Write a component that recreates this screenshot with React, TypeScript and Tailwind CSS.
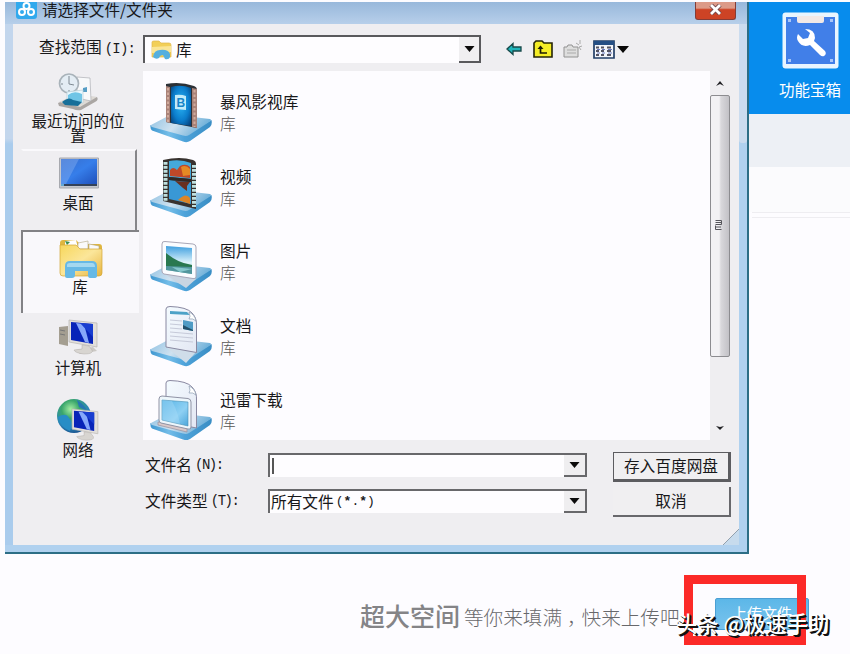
import type { ReactNode } from "react";

function DropArrow() {
  return (
    <svg className="w-[11px] h-[6px]" viewBox="0 0 11 6">
      <path d="M0.5 0h10L5.5 6z" fill="#0b0b0b" />
    </svg>
  );
}

function Stand({ children }: { children: ReactNode }) {
  return (
    <svg className="w-[62px] h-[62px] shrink-0" viewBox="0 0 62 62">
      <defs>
        <linearGradient id="stand" x1="0" y1="0" x2="1" y2="0.3">
          <stop offset="0" stopColor="#8fc1e2" />
          <stop offset="0.5" stopColor="#cfe2f0" />
          <stop offset="1" stopColor="#6cafd9" />
        </linearGradient>
        <linearGradient id="rim" x1="0" y1="0" x2="1" y2="0">
          <stop offset="0" stopColor="#3f97d0" />
          <stop offset="0.3" stopColor="#74bde8" />
          <stop offset="0.55" stopColor="#4ea3da" />
          <stop offset="1" stopColor="#398dc4" />
        </linearGradient>
        <linearGradient id="paper" x1="0" y1="0" x2="1" y2="1">
          <stop offset="0" stopColor="#f4fbff" />
          <stop offset="1" stopColor="#e3e7f3" />
        </linearGradient>
        <linearGradient id="screen" x1="0" y1="0" x2="1" y2="1">
          <stop offset="0" stopColor="#56b4e6" />
          <stop offset="0.6" stopColor="#8ed0f3" />
          <stop offset="1" stopColor="#4ba6da" />
        </linearGradient>
      </defs>
      <path d="M0.5 43L36 53L61.500 38Q62.500 43 60 45L40 59Q37 61 33 59.500L2 48.500Q0 47 0.500 43Z" fill="url(#rim)" />
      <path d="M1 43L20 33Q22 32 25 33L60 37Q62 38 60 39.500L39 53Q36.500 54.500 33 53.500L2 45Q0 44 1 43Z" fill="url(#stand)" />
      {children}
    </svg>
  );
}

function BaofengIcon() {
  return (
    <Stand>
      <defs>
        <radialGradient id="bf" cx="0.5" cy="0.45" r="0.7">
          <stop offset="0" stopColor="#2bb6f5" />
          <stop offset="0.6" stopColor="#0b7ccb" />
          <stop offset="1" stopColor="#063f78" />
        </radialGradient>
      </defs>
      <path d="M16 2Q30 -1 44 4Q47 5 47 8V46L16 40Z" fill="#2b3036" />
      <path d="M16 4L20 5V41L16 40ZM42 6L47 7V46L42 45Z" fill="#a98278" />
      <path d="M18 6V40M44.500 8V45" stroke="#d0aa9c" strokeWidth="2" strokeDasharray="2.500 2" />
      <path d="M21 5Q31 2 41 6V44L21 41Z" fill="url(#bf)" />
      <path d="M25 13Q31 12 36 14V28L25 27Z" fill="#d5f4fc" opacity="0.9" />
      <text x="26.500" y="25" fontFamily="Liberation Sans" fontWeight="bold" fontSize="12" fill="#1685c9">B</text>
    </Stand>
  );
}

function VideoIcon() {
  return (
    <Stand>
      <path d="M13 3Q30 -1 43 3Q46 4 46 7V52L13 44Z" fill="#38322f" />
      <path d="M15.500 5V44M44 8V50" stroke="#bfe0df" strokeWidth="4" strokeDasharray="2.800 1.200" />
      <path d="M19 4Q31 2 41 6V22L19 20Z" fill="#45a9dc" />
      <path d="M19 23L41 25V47L19 42Z" fill="#3998d5" />
      <path d="M20 13Q23 9 27 13L30 9Q36 6 40 10V21L20 19Z" fill="#bf4828" />
      <path d="M31 10Q36 7 40 12V18L33 19Z" fill="#e58a25" />
      <path d="M25 24L40 25L37 29V34L33 31Z" fill="#693021" />
      <path d="M28 43Q36 35 40 41V47Z" fill="#dd8527" />
      <path d="M19 21.500L41 23.500" stroke="#332824" strokeWidth="3" />
    </Stand>
  );
}

function PictureIcon() {
  return (
    <Stand>
      <defs>
        <linearGradient id="sky" x1="0" y1="0" x2="0" y2="1">
          <stop offset="0" stopColor="#3f9fdf" />
          <stop offset="0.6" stopColor="#dff4fb" />
          <stop offset="1" stopColor="#6cb5b5" />
        </linearGradient>
      </defs>
      <path d="M16 44L46 48L36 57Z" fill="#c9d5e2" />
      <path d="M12 13Q12 10 15 10.500L43 13Q46 13.500 46 16V46Q46 48 43 47.500L14 43Q12 42.500 12 40Z" fill="#fafcff" stroke="#a9a7b7" />
      <path d="M16 15L42 17V43L16 39Z" fill="url(#sky)" />
      <path d="M16 22Q27 31 38 33L42 34V37L16 36Z" fill="#29784f" />
      <path d="M16 35L42 36V43L16 39Z" fill="#52969d" />
      <path d="M22 36L42 38L30 41Z" fill="#85c7cc" />
    </Stand>
  );
}

function DocumentIcon() {
  return (
    <Stand>
      <path d="M16 41L46 46L36 57Z" fill="#cfdde9" />
      <path d="M16 3Q16 0.500 20 0.500Q37 1 42 7Q47 12 46.500 20V46.500L16 41Z" fill="url(#paper)" stroke="#8988a1" />
      <path d="M20 5L37 6L40 9L20 8Z" fill="#4ba2c7" />
      <path d="M20 14L32 15M20 18L32 19M20 22L32 23M20 26L43 28M20 30L43 32M20 34L43 36" stroke="#c6cad9" />
      <path d="M33 14L43 16V25L33 23Z" fill="#4f9bc5" />
      <path d="M33 19L43 24V25L33 23Z" fill="#23516c" />
      <path d="M39 6Q41 11 39 13Q43 12 46 15Q45 9 39 6Z" fill="#fff" stroke="#8e9db2" strokeWidth="0.700" />
    </Stand>
  );
}

function DownloadIcon() {
  return (
    <Stand>
      <path d="M16 3Q16 0.500 20 0.500Q37 1 42 7Q47 12 46.500 20V48L16 42Z" fill="url(#paper)" stroke="#8988a1" />
      <path d="M39 6Q41 11 39 13Q43 12 46 15Q45 9 39 6Z" fill="#fff" stroke="#8e9db2" strokeWidth="0.700" />
      <path d="M8 42L37 48V52L8 45Z" fill="#d9c8c8" stroke="#98909d" strokeWidth="0.700" />
      <path d="M9 19Q9 16 12 16L38 18.500Q41 19 41 22V47Q41 50 38 49L11 43Q9 42.500 9 40Z" fill="#edf6fb" stroke="#9093a5" />
      <path d="M12 20L38 22V46L12 40Z" fill="url(#screen)" stroke="#478eb4" strokeWidth="0.600" />
      <path d="M12 20L22 21Q28 32 30 44L12 40Z" fill="#b3e0f8" opacity="0.35" />
    </Stand>
  );
}

function RecentIcon() {
  return (
    <svg className="w-[42px] h-[38px]" viewBox="0 0 42 38">
      <path d="M1 30L17 23L40 24Q42 27 38 29L24 37Q20 38 16 36L2 33Z" fill="#aaa6a3" />
      <path d="M2 29L17 22L40 24L23 34Z" fill="#dedad5" />
      <path d="M20 4L33 5L34 28L20 25Z" fill="#f8f9fa" stroke="#adafb5" strokeWidth="0.700" />
      <path d="M26 15L30 14V19L26 19Z" fill="#579ec5" />
      <circle cx="12" cy="10.500" r="9.500" fill="#e4edf4" stroke="#a9b3ba" strokeWidth="1.700" />
      <path d="M12 3V11L17 12M4 11H6M12 17V19" fill="none" stroke="#7e8992" />
      <path d="M10 19L26 17V30L10 30Z" fill="#e9f8fe" stroke="#b9ced7" strokeWidth="0.700" />
      <path d="M11 22Q17 17 25 21V29L11 28Z" fill="#70c5e6" />
      <path d="M5 29Q12 23 16 27L25 29L21 33L8 32Z" fill="#176f99" />
    </svg>
  );
}

function DesktopIcon() {
  return (
    <svg className="w-[40px] h-[32px] shrink-0" viewBox="0 0 40 32">
      <defs>
        <linearGradient id="desk" x1="0" y1="0" x2="1" y2="1">
          <stop offset="0" stopColor="#376dcc" />
          <stop offset="0.5" stopColor="#367eea" />
          <stop offset="1" stopColor="#1f50bb" />
        </linearGradient>
      </defs>
      <path d="M0.500 1H39.500V31H0.500Z" fill="#c4c7cd" stroke="#a7a9af" />
      <path d="M2 2H38V27H2Z" fill="url(#desk)" />
      <path d="M2 2H20L7 27H2Z" fill="#8bb4f2" opacity="0.4" />
      <path d="M2 27H38V29H2Z" fill="#344258" />
      <path d="M2 27H5V29H2Z" fill="#62a9d4" />
    </svg>
  );
}

function LibraryIcon({ className }: { className: string }) {
  return (
    <svg className={className} viewBox="0 0 44 39" preserveAspectRatio="none">
      <defs>
        <linearGradient id="folder" x1="0" y1="0" x2="1" y2="1">
          <stop offset="0" stopColor="#f7d75b" />
          <stop offset="0.5" stopColor="#fbe69a" />
          <stop offset="1" stopColor="#e7b43e" />
        </linearGradient>
      </defs>
      <path d="M1 4Q1 1 4 1H17L21 5H40Q43 5 43 8V33Q43 36 40 36H4Q1 36 1 33Z" fill="#dfb640" />
      <path d="M6 2L17 1L19 9H6Z" fill="#fff" />
      <path d="M6 2L11 3L8 6Z" fill="#398e51" />
      <path d="M19 4L29 2V10H19ZM30 5L40 7V11H30Z" fill="#fafafa" stroke="#b4a883" strokeWidth="0.600" />
      <path d="M1 6H17L21 10H43V34Q43 37 40 37H4Q1 37 1 34Z" fill="url(#folder)" stroke="#d2a737" strokeWidth="0.700" />
      <path d="M6 37V27Q6 22 11 22H33Q38 22 38 27V37Q38 39 35 39H31Q29 39 29 36V32H16V36Q16 39 13 39H8Q6 39 6 37Z" fill="#67b9e5" />
      <path d="M8 26Q8 24 11 24H33Q36 24 36 28H8Z" fill="#a3d8f0" />
    </svg>
  );
}

function SmallLibraryIcon() {
  return (
    <svg className="w-[21px] h-[20px]" viewBox="0 0 21 20">
      <path d="M1 2Q1 1 3 1H8L10 3H18Q20 3 20 5V17H1Z" fill="#f2cf58" stroke="#dfb54b" strokeWidth="0.700" />
      <path d="M1 7L20 6V12L1 13Z" fill="#fae596" />
      <path d="M2 17Q3 10 9 10Q17 9 19 14V17Q18 20 14 19L12 15Q9 15 8 18Q5 20 2 17Z" fill="#55afdf" />
    </svg>
  );
}

function Monitor() {
  return (
    <g>
      <path d="M11 1L39 4V28L11 23Z" fill="#e2dfdb" stroke="#b8b5b1" strokeWidth="0.700" />
      <path d="M13 3L35 5V25L13 21Z" fill="#0824b8" />
      <path d="M18 4L26 5L31 24L27 23Z" fill="#86a8fb" />
      <path d="M22 4L35 5V18Z" fill="#183dd0" />
      <path d="M24 26L31 27L34 31Q36 35 26 35Q17 34 16 31L24 30Z" fill="#d8d5d1" stroke="#b2aeaa" strokeWidth="0.500" />
    </g>
  );
}

function ComputerIcon() {
  return (
    <svg className="w-[40px] h-[36px]" viewBox="0 0 40 36">
      <path d="M1 8L10 7V27L1 25Z" fill="#a49e91" />
      <path d="M2 11L7 12M2 15L7 16" stroke="#777" />
      <path d="M17 31L35 28L39 32L22 35Z" fill="#cbc8c4" />
      <Monitor />
    </svg>
  );
}

function NetworkIcon() {
  return (
    <svg className="w-[42px] h-[43px]" viewBox="0 0 42 43">
      <defs>
        <radialGradient id="globe" cx="0.4" cy="0.3" r="0.75">
          <stop offset="0" stopColor="#a6efa2" />
          <stop offset="0.35" stopColor="#3aa66b" />
          <stop offset="0.7" stopColor="#2a85b8" />
          <stop offset="1" stopColor="#174b88" />
        </radialGradient>
      </defs>
      <circle cx="17" cy="18" r="17" fill="url(#globe)" />
      <path d="M1 19Q9 14 12 20Q17 24 13 33Q3 29 1 19Z" fill="#278dc6" />
      <path d="M20 2Q28 7 30 13L22 9Z" fill="#2576b2" />
      <g transform="translate(5 10) scale(0.92)">
        <Monitor />
      </g>
    </svg>
  );
}

const libraries = [
  { name: "暴风影视库", icon: <BaofengIcon /> },
  { name: "视频", icon: <VideoIcon /> },
  { name: "图片", icon: <PictureIcon /> },
  { name: "文档", icon: <DocumentIcon /> },
  { name: "迅雷下载", icon: <DownloadIcon /> },
];

function TitleBar() {
  return (
    <div className="h-[22px] flex items-start px-[11px] bg-linear-to-b from-[#98b8db] to-[#b7cfea]">
      <svg className="w-[21px] h-[17px] shrink-0" viewBox="0 0 21 17">
        <path d="M0 0H21V14Q21 17 18 17H3Q0 17 0 14Z" fill="#31a9ed" />
        <g fill="none" stroke="#fff" strokeWidth="2">
          <circle cx="10.500" cy="4" r="3" />
          <circle cx="6" cy="10" r="3" />
          <circle cx="15" cy="10" r="3" />
        </g>
      </svg>
      <span className="ml-[5px] -mt-[2px] leading-[18px] text-[15.600px] grow">请选择文件/文件夹</span>
      <div className="w-[41px] h-[18px] shrink-0 flex justify-center border border-t-0 border-[#843c36] rounded-b-[3px] bg-linear-to-b from-[#dc9a88] from-35% to-[#cd4325] to-45%">
        <svg className="w-[13px] h-[11px] mt-[2px]" viewBox="0 0 13 11">
          <path d="M2 1L11 10M11 1L2 10" stroke="#71464a" strokeWidth="4.500" />
          <path d="M2 1L11 10M11 1L2 10" stroke="#fff" strokeWidth="2.800" />
        </svg>
      </div>
    </div>
  );
}

function LookupRow() {
  return (
    <div className="h-[28px] mt-[11px] flex items-center">
      <div className="w-[130px] pl-[26px] -mt-[3px] whitespace-nowrap">
        查找范围<span className="font-['Liberation_Mono'] text-[14px] tracking-[-0.800px] ml-[3px]">(I):</span>
      </div>
      <div className="w-[338px] h-[28px] flex border-2 border-b-0 border-[#59595c] bg-[#fefdff]">
        <div className="grow flex items-center pl-[6px]">
          <SmallLibraryIcon />
          <span className="ml-[4px]">库</span>
        </div>
        <div className="w-[20px] flex items-center justify-center bg-[#f0eff1] border-b-2 border-[#59595c]">
          <DropArrow />
        </div>
      </div>
      <svg className="w-[16px] h-[14px] ml-[25px]" viewBox="0 0 16 14">
        <path d="M1 7L7 1.500V5H15V9H7V12.500Z" fill="#20b4ba" stroke="#174849" strokeWidth="1.300" />
      </svg>
      <svg className="w-[21px] h-[18px] ml-[11px]" viewBox="0 0 21 18">
        <path d="M1 17V3L3 1H9L11 3H19V17Z" fill="#f5ed26" stroke="#242408" strokeWidth="1.600" />
        <path d="M7.500 7V13H14" fill="none" stroke="#1c1b05" strokeWidth="1.700" />
        <path d="M4.500 9L7.500 5.500L10.500 9Z" fill="#1c1b05" />
      </svg>
      <svg className="w-[20px] h-[18px] ml-[9px]" viewBox="0 0 20 18">
        <path d="M1 17V7H4L5 5H9L10 7H15V17Z" fill="#dedede" stroke="#929292" />
        <path d="M4 10H13M4 13H13M13 3L16 5M17 0V4M19 6L16 7L18 10" fill="none" stroke="#aaa" />
      </svg>
      <svg className="w-[22px] h-[19px] ml-[10px]" viewBox="0 0 22 19">
        <path d="M1 1H21V18H1Z" fill="#f3f5fa" stroke="#233f67" strokeWidth="1.700" />
        <path d="M1 1H21V5H1Z" fill="#244e84" />
        <path d="M3 7.500H6M8 7.500H11M14 7.500H18M3 11H6M8 11H11M14 11H18M3 15H6M8 15H11M14 15H18" stroke="#535361" strokeWidth="2" />
        <path d="M4 9.500H7M9 9.500H12M15 9.500H19M4 13H7M9 13H12M15 13H19" stroke="#6a7abd" />
      </svg>
      <svg className="w-[12px] h-[7px] ml-[2px]" viewBox="0 0 12 7">
        <path d="M0 0H12L6 7Z" fill="#080808" />
      </svg>
    </div>
  );
}

function Sidebar() {
  return (
    <div className="w-[130px] shrink-0 pl-[8px] text-center text-[15.500px]">
      <div className="h-[78px] w-[114px] pt-[2px] flex flex-col items-center">
        <RecentIcon />
        <span className="leading-[15px] mt-[2px] w-[96px]">最近访问的位置</span>
      </div>
      <div className="h-[81px] w-[116px] pt-[6px] flex flex-col items-center border-2 border-t-[#faf9fc] border-l-transparent border-r-[#858588] border-b-0">
        <DesktopIcon />
        <span className="leading-[20px] mt-[3px] mr-[2px]">桌面</span>
      </div>
      <div className="h-[83px] w-[118px] pt-[7px] flex flex-col items-center border-l-2 border-t-2 border-[#828285] bg-[#f9f8fb]">
        <LibraryIcon className="w-[44px] h-[39px] shrink-0" />
        <span className="leading-[16px] mr-[2px]">库</span>
      </div>
      <div className="h-[82px] w-[114px] pt-[6px] flex flex-col items-center">
        <ComputerIcon />
        <span className="leading-[20px] mt-[2px]">计算机</span>
      </div>
      <div className="w-[114px] pt-[3px] flex flex-col items-center">
        <NetworkIcon />
        <span className="leading-[18px] -mt-[1px]">网络</span>
      </div>
    </div>
  );
}

function FileList() {
  return (
    <div className="h-[369px] flex">
      <div className="w-[567px] pt-[11px] pl-[7px] bg-[#fdfcff] overflow-hidden">
        {libraries.map((lib) => (
          <div key={lib.name} className="h-[74.500px] flex">
            {lib.icon}
            <div className="ml-[8px] pt-[10px] text-[15.700px]">
              <div className="leading-[20px]">{lib.name}</div>
              <div className="leading-[20px] mt-[2px] font-light text-[#555]">库</div>
            </div>
          </div>
        ))}
      </div>
      <div className="w-[20px] flex flex-col items-center">
        <svg className="w-[8px] h-[5px] mt-[10px]" viewBox="0 0 8 5">
          <path d="M0 5L4 0L8 5L4 3Z" fill="#202024" />
        </svg>
        <div className="w-[20px] h-[262px] mt-[9px] flex items-center justify-center rounded-[2px] border border-[#8c8c90] bg-linear-to-r from-[#f2f1f4] from-45% via-[#d9d8dc] via-55% to-[#c2c1c6]">
          <svg className="w-[7px] h-[10px] -mt-[2px] mr-[4px]" viewBox="0 0 7 10">
            <path d="M0.500 0.500H6.500V4.500H0.500M0.500 2.500H6M0.500 7H6M0.500 5.500V9.500H6.500" stroke="#55555a" fill="none" />
          </svg>
        </div>
        <svg className="w-[8px] h-[4px] mt-[69px]" viewBox="0 0 8 4">
          <path d="M0 0L4 1L8 0L4 4Z" fill="#202024" />
        </svg>
      </div>
    </div>
  );
}

function FieldRow({ label, hotkey, children }: { label: string; hotkey: string; children?: ReactNode }) {
  return (
    <div className="h-[24px] flex">
      <div className="w-[125px] pl-[2px] flex items-center whitespace-nowrap">
        {label}
        <span className="font-['Liberation_Mono'] text-[14px] tracking-[-1.500px] ml-[3px]">{hotkey}</span>
      </div>
      <div className="w-[319px] h-[24px] flex border-2 border-b-0 border-[#68686b] bg-[#fefdff]">
        <div className="grow flex items-center pl-[2px]">{children}</div>
        <div className="w-[21px] flex items-center justify-center bg-[#efeef0] border-b-2 border-[#68686b]">
          <DropArrow />
        </div>
      </div>
    </div>
  );
}

function FileDialog() {
  return (
    <div className="w-[744px] h-[552px] shrink-0 flex flex-col border-r-2 border-b-2 border-[#2d6e86] bg-[#b0d1ef]">
      <TitleBar />
      <div className="flex h-[521px]">
        <div className="w-[8px] h-full bg-linear-to-b from-[#c3d6ed] from-22% to-[#aacced] to-23%" />
        <div className="w-[726px] h-full bg-[#efeef1]">
          <LookupRow />
          <div className="flex mt-[8px]">
            <Sidebar />
            <div>
              <FileList />
              <div className="flex mt-[12px]">
                <div className="w-[444px] pt-px space-y-[12px]">
                  <FieldRow label="文件名" hotkey="(N):">
                    <div className="w-[2px] h-[16px] bg-[#555]" />
                  </FieldRow>
                  <FieldRow label="文件类型" hotkey="(T):">
                    <span className="-ml-[1px]">所有文件</span>
                    <span className="font-['Liberation_Mono'] text-[13px] ml-[2px]">
                      (<b>*</b>.<b>*</b>)
                    </span>
                  </FieldRow>
                </div>
                <div className="ml-[26px]">
                  <div className="w-[118px] h-[30px] flex items-center justify-center border border-r-[3px] border-b-[3px] border-[#5c5c60] bg-[#f0eff1]">
                    存入百度网盘
                  </div>
                  <div className="w-[118px] h-[30px] mt-[5px] flex items-center justify-center border-r-2 border-b-2 border-[#68686c] bg-[#f0eff1]">
                    取消
                  </div>
                </div>
              </div>
              <svg className="block w-[16px] h-[16px] ml-[580px] mt-[12px]" viewBox="0 0 16 16">
                <path d="M16 0V16H0Z" fill="#c7dbed" />
                <path d="M0 16L16 0" stroke="#92a0ae" />
              </svg>
            </div>
          </div>
        </div>
        <div className="w-[8px] h-full">
          <div className="h-[119px] rounded-b-[3px] bg-[#cbdcef]" />
        </div>
      </div>
    </div>
  );
}

function DiskPage() {
  return (
    <div className="grow">
      <div className="h-[112px] pt-[10px] pl-[21px] flex flex-col items-center bg-[#078ced] text-white">
        <svg className="w-[57px] h-[57px]" viewBox="0 0 57 57">
          <rect x="0.500" y="0.500" width="56" height="56" rx="3" fill="#e8f5ff" />
          <path d="M4 5H53V52H4Z" fill="#417fe8" />
          <path d="M15 4H42V9Q42 11 40 11H17Q15 11 15 9Z" fill="#f2e9e6" />
          <path d="M6 7h3v3H6zM48 7h3v3h-3zM6 47h3v3H6zM48 47h3v3h-3z" fill="#a8c6f8" />
          <path d="M23 17Q33 17 33 26L32 29L43 39Q45 42 42 44Q40 45 38 43L28 33Q20 36 16 29Q14 26 16 22L21 27L26 26L28 21Z" fill="#fff" />
        </svg>
        <div className="mt-[9px] leading-[22px] text-[15.500px]">功能宝箱</div>
      </div>
      <div className="h-[53px] bg-[#edf0f5]" />
      <div className="h-[45px] bg-[#fbfbfd]" />
      <div className="ml-[3px] h-[6px] border-y border-[#eeedf1]" />
    </div>
  );
}

export default function App() {
  return (
    <div className="relative w-[850px] h-[654px] pt-[2px] overflow-hidden bg-[#fdfcff] text-[15.700px] leading-[20px] text-[#18181a] font-['Noto_Sans_CJK_SC',sans-serif]">
      <div className="flex pl-[5px]">
        <FileDialog />
        <DiskPage />
      </div>
      <div className="flex items-center mt-[39px] h-[44px] pl-[360px] whitespace-nowrap">
        <span className="text-[25px] leading-[40px] font-medium text-[#848487]">超大空间</span>
        <span className="ml-[4px] mt-[4px] text-[19.600px] leading-[30px] font-light text-[#68686b]">
          等你来填满<span className="pl-[5px] -mr-[5px]">，</span>快来上传吧
        </span>
      </div>
      <div className="absolute left-[715px] top-[598px] w-[94px] h-[32px] rounded-[2px] border border-[#4b9fd3] bg-linear-to-b from-[#5cb7e8] to-[#79c3ed] flex items-start justify-center pt-[4px] text-[15px] text-white">
        上传文件
      </div>
      <div className="absolute left-[684px] top-[575px] w-[122px] h-[70px] border-[9px] border-[#fc2a28]" />
      <div className="absolute left-[676px] top-[608px] text-[21.300px] leading-[30px] font-medium text-white whitespace-nowrap [text-shadow:2px_2px_0_#111,1px_1px_0_#111]">
        头条 <span>@极速手助</span>
      </div>
    </div>
  );
}
